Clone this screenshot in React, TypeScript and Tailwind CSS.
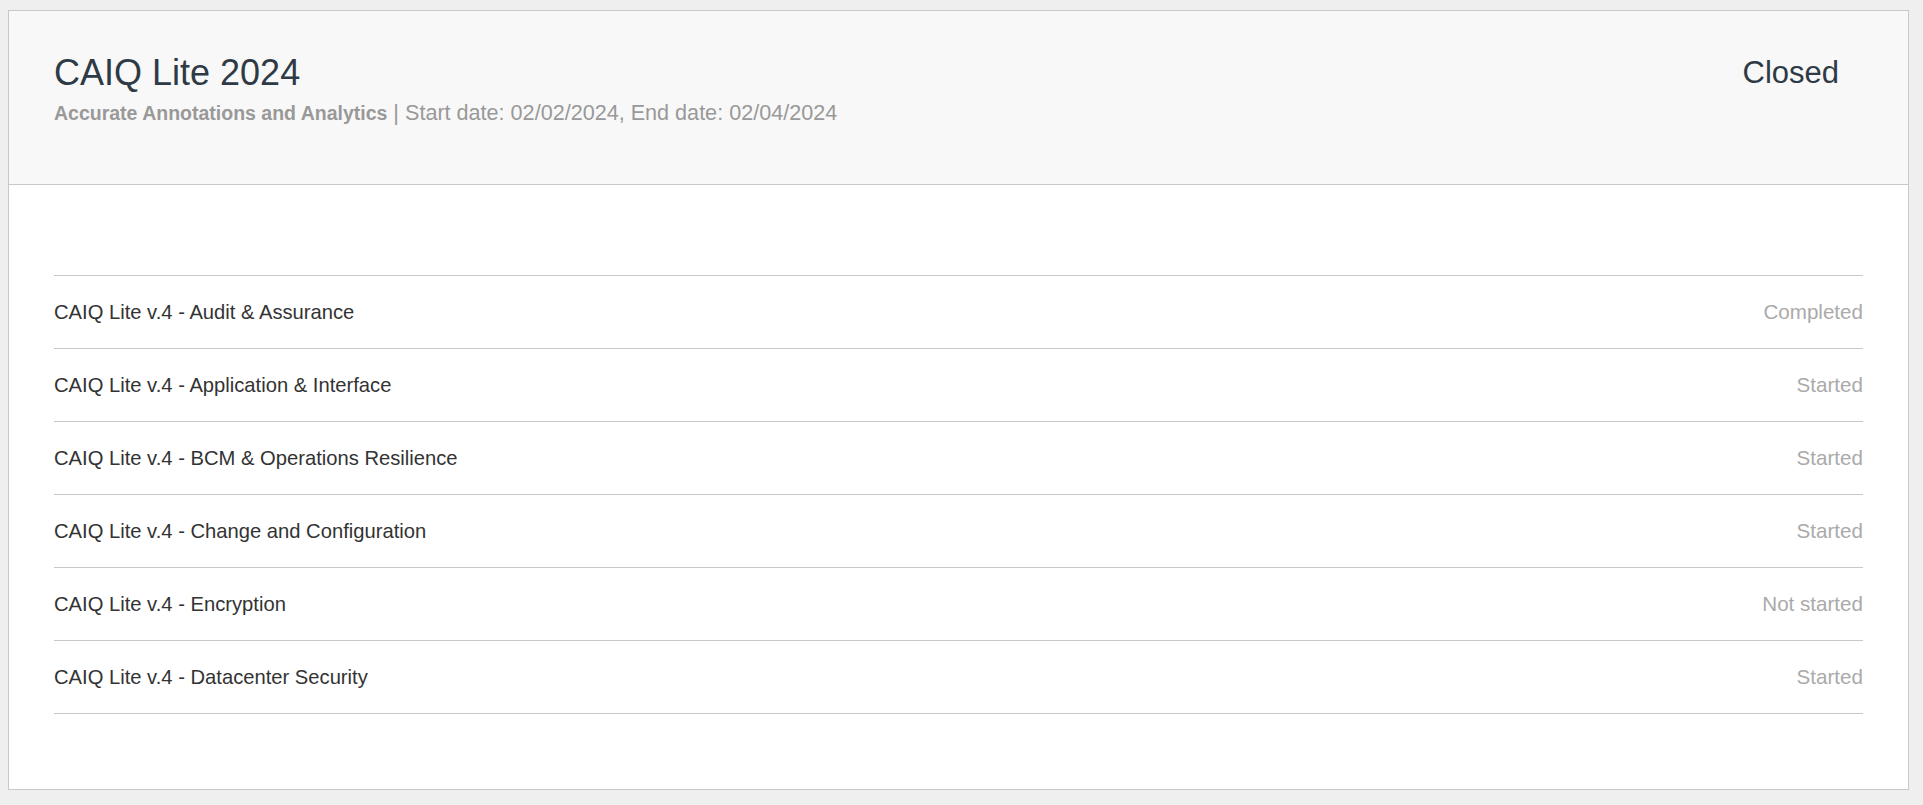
import React from 'react';

const rows = [
  { name: 'CAIQ Lite v.4 - Audit & Assurance', status: 'Completed' },
  { name: 'CAIQ Lite v.4 - Application & Interface', status: 'Started' },
  { name: 'CAIQ Lite v.4 - BCM & Operations Resilience', status: 'Started' },
  { name: 'CAIQ Lite v.4 - Change and Configuration', status: 'Started' },
  { name: 'CAIQ Lite v.4 - Encryption', status: 'Not started' },
  { name: 'CAIQ Lite v.4 - Datacenter Security', status: 'Started' },
];

export default function App() {
  return (
    <div className="min-h-screen bg-[#efefef] pt-[10px] pl-[8px] font-['Liberation_Sans',Arial,sans-serif]">
      <div className="w-[1901px] border border-[#c8c8c8] bg-white">
        {/* Header */}
        <div className="h-[174px] flex justify-between bg-[#f8f8f8] border-b border-[#c8c8c8] pl-[45px] pr-[69px] pt-[38px]">
          <div>
            <h1 className="text-[36px] leading-[48px] text-[#2e3a45]">CAIQ Lite 2024</h1>
            <p className="mt-[3px] text-[21.6px] leading-[26px] text-[#999999]">
              <span className="font-bold text-[19.5px]">Accurate Annotations and Analytics</span>
              {' | '}Start date: 02/02/2024, End date: 02/04/2024
            </p>
          </div>
          <div className="text-[31px] leading-[48px] text-[#2e3a45]">Closed</div>
        </div>

        {/* Questionnaire list */}
        <div className="px-[45px] pt-[90px] pb-[75px]">
          <div className="border-b border-[#c8c8c8]">
            {rows.map((r) => (
              <div
                key={r.name}
                className="h-[73px] flex items-center justify-between border-t border-[#c8c8c8]"
              >
                <span className="text-[20.2px] text-[#333333]">{r.name}</span>
                <span className="text-[20.6px] text-[#aaaaaa]">{r.status}</span>
              </div>
            ))}
          </div>
        </div>
      </div>
    </div>
  );
}
